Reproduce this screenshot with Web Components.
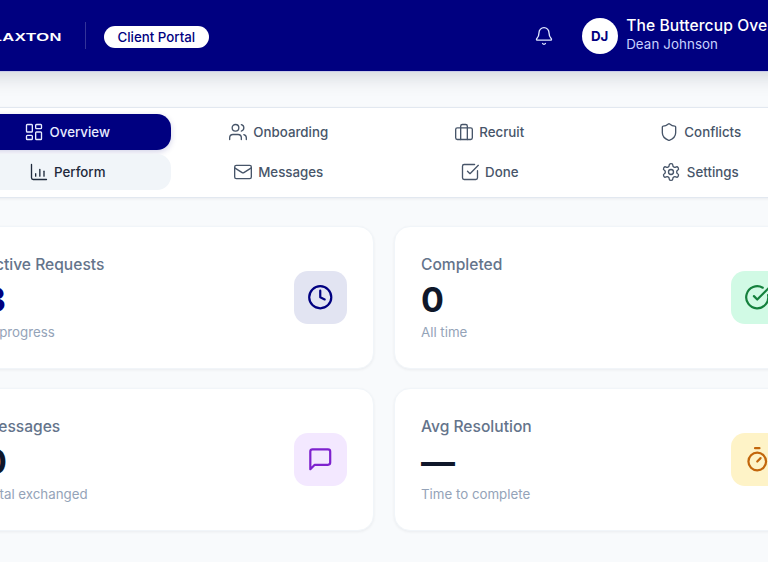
<!DOCTYPE html>
<html>
<head>
<meta charset="utf-8">
<title>Client Portal</title>
<style>
  html, body { margin: 0; height: 100%; overflow: hidden; background: #f8fafc; }
  body { font-family: Inter, "Liberation Sans", sans-serif; }
</style>
</head>
<body>
<portal-page>
  <portal-header slot="header"></portal-header>
  <portal-nav slot="nav">
    <nav-tab icon="overview" active>Overview</nav-tab>
    <nav-tab icon="users">Onboarding</nav-tab>
    <nav-tab icon="briefcase">Recruit</nav-tab>
    <nav-tab icon="shield">Conflicts</nav-tab>
    <nav-tab icon="chart" soft>Perform</nav-tab>
    <nav-tab icon="mail">Messages</nav-tab>
    <nav-tab icon="done">Done</nav-tab>
    <nav-tab icon="gear">Settings</nav-tab>
  </portal-nav>
  <stat-card slot="cards" label="Active Requests" value="3" note="In progress" icon="clock" tone="navy"></stat-card>
  <stat-card slot="cards" label="Completed" value="0" note="All time" icon="check" tone="green"></stat-card>
  <stat-card slot="cards" label="Messages" value="0" note="Total exchanged" icon="chat" tone="purple"></stat-card>
  <stat-card slot="cards" label="Avg Resolution" value="—" note="Time to complete" icon="timer" tone="amber"></stat-card>
</portal-page>

<script>
// Lucide-style icon paths
const icons = {
  overview: '<rect x="3" y="3" width="7" height="9" rx="1"/><rect x="14" y="3" width="7" height="5" rx="1"/><rect x="14" y="12" width="7" height="9" rx="1"/><rect x="3" y="16" width="7" height="5" rx="1"/>',
  users: '<path d="M16 21v-2a4 4 0 0 0-4-4H6a4 4 0 0 0-4 4v2"/><circle cx="9" cy="7" r="4"/><path d="M22 21v-2a4 4 0 0 0-3-3.87"/><path d="M16 3.13a4 4 0 0 1 0 7.75"/>',
  briefcase: '<rect x="2" y="7" width="20" height="14" rx="2"/><path d="M16 21V5a2 2 0 0 0-2-2h-4a2 2 0 0 0-2 2v16"/>',
  shield: '<path d="M20 13c0 5-3.5 7.5-7.66 8.95a1 1 0 0 1-.67-.01C7.5 20.5 4 18 4 13V6a1 1 0 0 1 1-1c2 0 4.5-1.2 6.24-2.72a1.17 1.17 0 0 1 1.52 0C14.51 3.81 17 5 19 5a1 1 0 0 1 1 1z"/>',
  chart: '<path d="M3 3v16a2 2 0 0 0 2 2h16"/><path d="M8 17v-3"/><path d="M13 17V9"/><path d="M18 17v-6"/>',
  mail: '<rect x="2" y="4" width="20" height="16" rx="2"/><path d="m22 7-8.97 5.7a1.94 1.94 0 0 1-2.06 0L2 7"/>',
  done: '<path d="M21 10.5V19a2 2 0 0 1-2 2H5a2 2 0 0 1-2-2V5a2 2 0 0 1 2-2h12.5"/><path d="m9 11 3 3L22 4"/>',
  gear: '<path d="M12.22 2h-.44a2 2 0 0 0-2 2v.18a2 2 0 0 1-1 1.73l-.43.25a2 2 0 0 1-2 0l-.15-.08a2 2 0 0 0-2.73.73l-.22.38a2 2 0 0 0 .73 2.73l.15.1a2 2 0 0 1 1 1.72v.51a2 2 0 0 1-1 1.74l-.15.09a2 2 0 0 0-.73 2.73l.22.38a2 2 0 0 0 2.73.73l.15-.08a2 2 0 0 1 2 0l.43.25a2 2 0 0 1 1 1.73V20a2 2 0 0 0 2 2h.44a2 2 0 0 0 2-2v-.18a2 2 0 0 1 1-1.73l.43-.25a2 2 0 0 1 2 0l.15.08a2 2 0 0 0 2.73-.73l.22-.39a2 2 0 0 0-.73-2.73l-.15-.08a2 2 0 0 1-1-1.74v-.5a2 2 0 0 1 1-1.74l.15-.09a2 2 0 0 0 .73-2.73l-.22-.38a2 2 0 0 0-2.73-.73l-.15.08a2 2 0 0 1-2 0l-.43-.25a2 2 0 0 1-1-1.73V4a2 2 0 0 0-2-2z"/><circle cx="12" cy="12" r="3"/>',
  bell: '<path d="M10.27 21a2 2 0 0 0 3.46 0"/><path d="M3.26 15.33A1 1 0 0 0 4 17h16a1 1 0 0 0 .74-1.67C19.41 13.96 18 12.5 18 8A6 6 0 0 0 6 8c0 4.5-1.41 5.96-2.74 7.33"/>',
  clock: '<circle cx="12" cy="12" r="10"/><path d="M12 6v6l4 2"/>',
  check: '<path d="M21.8 10A10 10 0 1 1 17 3.34"/><path d="m9 11 3 3L22 4"/>',
  chat: '<path d="M21 15a2 2 0 0 1-2 2H7l-4 4V5a2 2 0 0 1 2-2h14a2 2 0 0 1 2 2z"/>',
  timer: '<line x1="10" x2="14" y1="2" y2="2"/><line x1="12" x2="15" y1="14" y2="11"/><circle cx="12" cy="14" r="8"/>'
};

const svgIcon = (name, size, width = 2) =>
  `<svg width="${size}" height="${size}" viewBox="0 0 24 24" fill="none" stroke="currentColor" stroke-width="${width}" stroke-linecap="round" stroke-linejoin="round">${icons[name]}</svg>`;

class PortalPage extends HTMLElement {
  constructor() {
    super();
    this.attachShadow({ mode: 'open' });
    this.shadowRoot.innerHTML = `
      <style>
        :host { display: block; width: 854px; margin-left: -43px; }
        main { padding: 36px 0 0; }
        .cards {
          display: grid;
          grid-template-columns: 417px 417px;
          gap: 19px 20px;
          margin: 28.5px 0 0;
        }
      </style>
      <slot name="header"></slot>
      <main>
        <slot name="nav"></slot>
        <div class="cards"><slot name="cards"></slot></div>
      </main>
    `;
  }
}

class PortalHeader extends HTMLElement {
  constructor() {
    super();
    this.attachShadow({ mode: 'open' });
    this.shadowRoot.innerHTML = `
      <style>
        :host {
          display: flex;
          align-items: center;
          height: 71px;
          background: #000080;
          color: #fff;
          box-shadow: 0 1px 0 #c9cae8, 0 4px 20px rgba(15, 23, 42, .18);
          white-space: nowrap;
          position: relative;
          overflow: hidden;
        }
        .logo {
          width: 105px;
          margin-top: 3px;
          text-align: right;
          font: 700 11px "Liberation Sans", sans-serif;
          letter-spacing: .3px;
          transform: scaleX(1.5);
          transform-origin: right center;
        }
        .rule { width: 1px; height: 27px; background: rgba(255,255,255,.2); margin-left: 23px; }
        .pill {
          margin: 3px 0 0 18px;
          padding: 0 13.5px;
          height: 22px;
          line-height: 22px;
          border-radius: 11px;
          background: #fff;
          color: #000080;
          font-size: 13.3px;
          font-weight: 500;
        }
        .bell { display: flex; margin-left: 325px; color: #e0e7ff; }
        .avatar {
          display: flex;
          align-items: center;
          justify-content: center;
          width: 36px;
          height: 36px;
          margin-left: 28px;
          border-radius: 50%;
          background: #fff;
          color: #000080;
          font-size: 13.3px;
          font-weight: 700;
        }
        .who { margin: -3px 0 0 8.5px; }
        .name { font-size: 15.6px; font-weight: 500; line-height: 20px; letter-spacing: .1px; }
        .sub { font-size: 13.3px; line-height: 17px; letter-spacing: .1px; color: #c7d2fe; }
      </style>
      <div class="logo">CLAXTON</div>
      <div class="rule"></div>
      <div class="pill">Client Portal</div>
      <div class="bell">${svgIcon('bell', 20, 1.6)}</div>
      <div class="avatar">DJ</div>
      <div class="who">
        <div class="name">The Buttercup Oven</div>
        <div class="sub">Dean Johnson</div>
      </div>
    `;
  }
}

class PortalNav extends HTMLElement {
  constructor() {
    super();
    this.attachShadow({ mode: 'open' });
    this.shadowRoot.innerHTML = `
      <style>
        :host {
          display: grid;
          grid-template-columns: repeat(4, 206px);
          grid-auto-rows: 36px;
          gap: 4px 5px;
          padding: 6px 8px 6.5px;
          background: #fff;
          border-top: 1px solid #e2e8f0;
          border-bottom: 1px solid #e2e8f0;
          box-shadow: 0 1px 3px rgba(15, 23, 42, .06);
        }
      </style>
      <slot></slot>
    `;
  }
}

class NavTab extends HTMLElement {
  constructor() {
    super();
    this.attachShadow({ mode: 'open' });
    this.shadowRoot.innerHTML = `
      <style>
        :host {
          display: flex;
          align-items: center;
          justify-content: center;
          gap: 5.5px;
          padding-right: 2px;
          border-radius: 14px;
          color: #475569;
          font-size: 13.3px;
          font-weight: 500;
        }
        :host([active]) { background: #000080; color: #e8ecff; box-shadow: 0 2px 6px rgba(0,0,128,.18); }
        :host([soft]) { background: #f1f5f9; color: #1e293b; }
        svg { display: block; }
      </style>
      ${svgIcon(this.getAttribute('icon'), 20, 1.6)}
      <slot></slot>
    `;
  }
}

class StatCard extends HTMLElement {
  constructor() {
    super();
    this.attachShadow({ mode: 'open' });
    const tones = {
      navy: ['#e2e4f2', '#000080'],
      green: ['#d1fae5', '#15803d'],
      purple: ['#f3e8ff', '#7e22ce'],
      amber: ['#fef3c7', '#c2660c']
    };
    const [bg, fg] = tones[this.getAttribute('tone')];
    const valueColor = this.getAttribute('tone') === 'navy' ? '#000080' : '#0f172a';
    this.shadowRoot.innerHTML = `
      <style>
        :host {
          display: flex;
          align-items: center;
          justify-content: space-between;
          height: 143px;
          box-sizing: border-box;
          padding: 0 26px;
          background: #fff;
          border: 1px solid #f1f5f9;
          border-radius: 16px;
          box-shadow: 0 1px 3px rgba(15, 23, 42, .06);
        }
        .label { font-size: 15.6px; font-weight: 500; line-height: 24px; color: #64748b; }
        .value { font-size: 34px; font-weight: 700; line-height: 38px; margin: 4px 0 3px; color: ${valueColor}; }
        .note { font-size: 13.3px; line-height: 20px; color: #94a3b8; }
        .badge {
          display: flex;
          align-items: center;
          justify-content: center;
          flex: none;
          width: 53px;
          height: 53px;
          border-radius: 14px;
          background: ${bg};
          color: ${fg};
        }
      </style>
      <div>
        <div class="label">${this.getAttribute('label')}</div>
        <div class="value">${this.getAttribute('value')}</div>
        <div class="note">${this.getAttribute('note')}</div>
      </div>
      <div class="badge">${svgIcon(this.getAttribute('icon'), 26.5)}</div>
    `;
  }
}

customElements.define('portal-page', PortalPage);
customElements.define('portal-header', PortalHeader);
customElements.define('portal-nav', PortalNav);
customElements.define('nav-tab', NavTab);
customElements.define('stat-card', StatCard);
</script>
</body>
</html>
